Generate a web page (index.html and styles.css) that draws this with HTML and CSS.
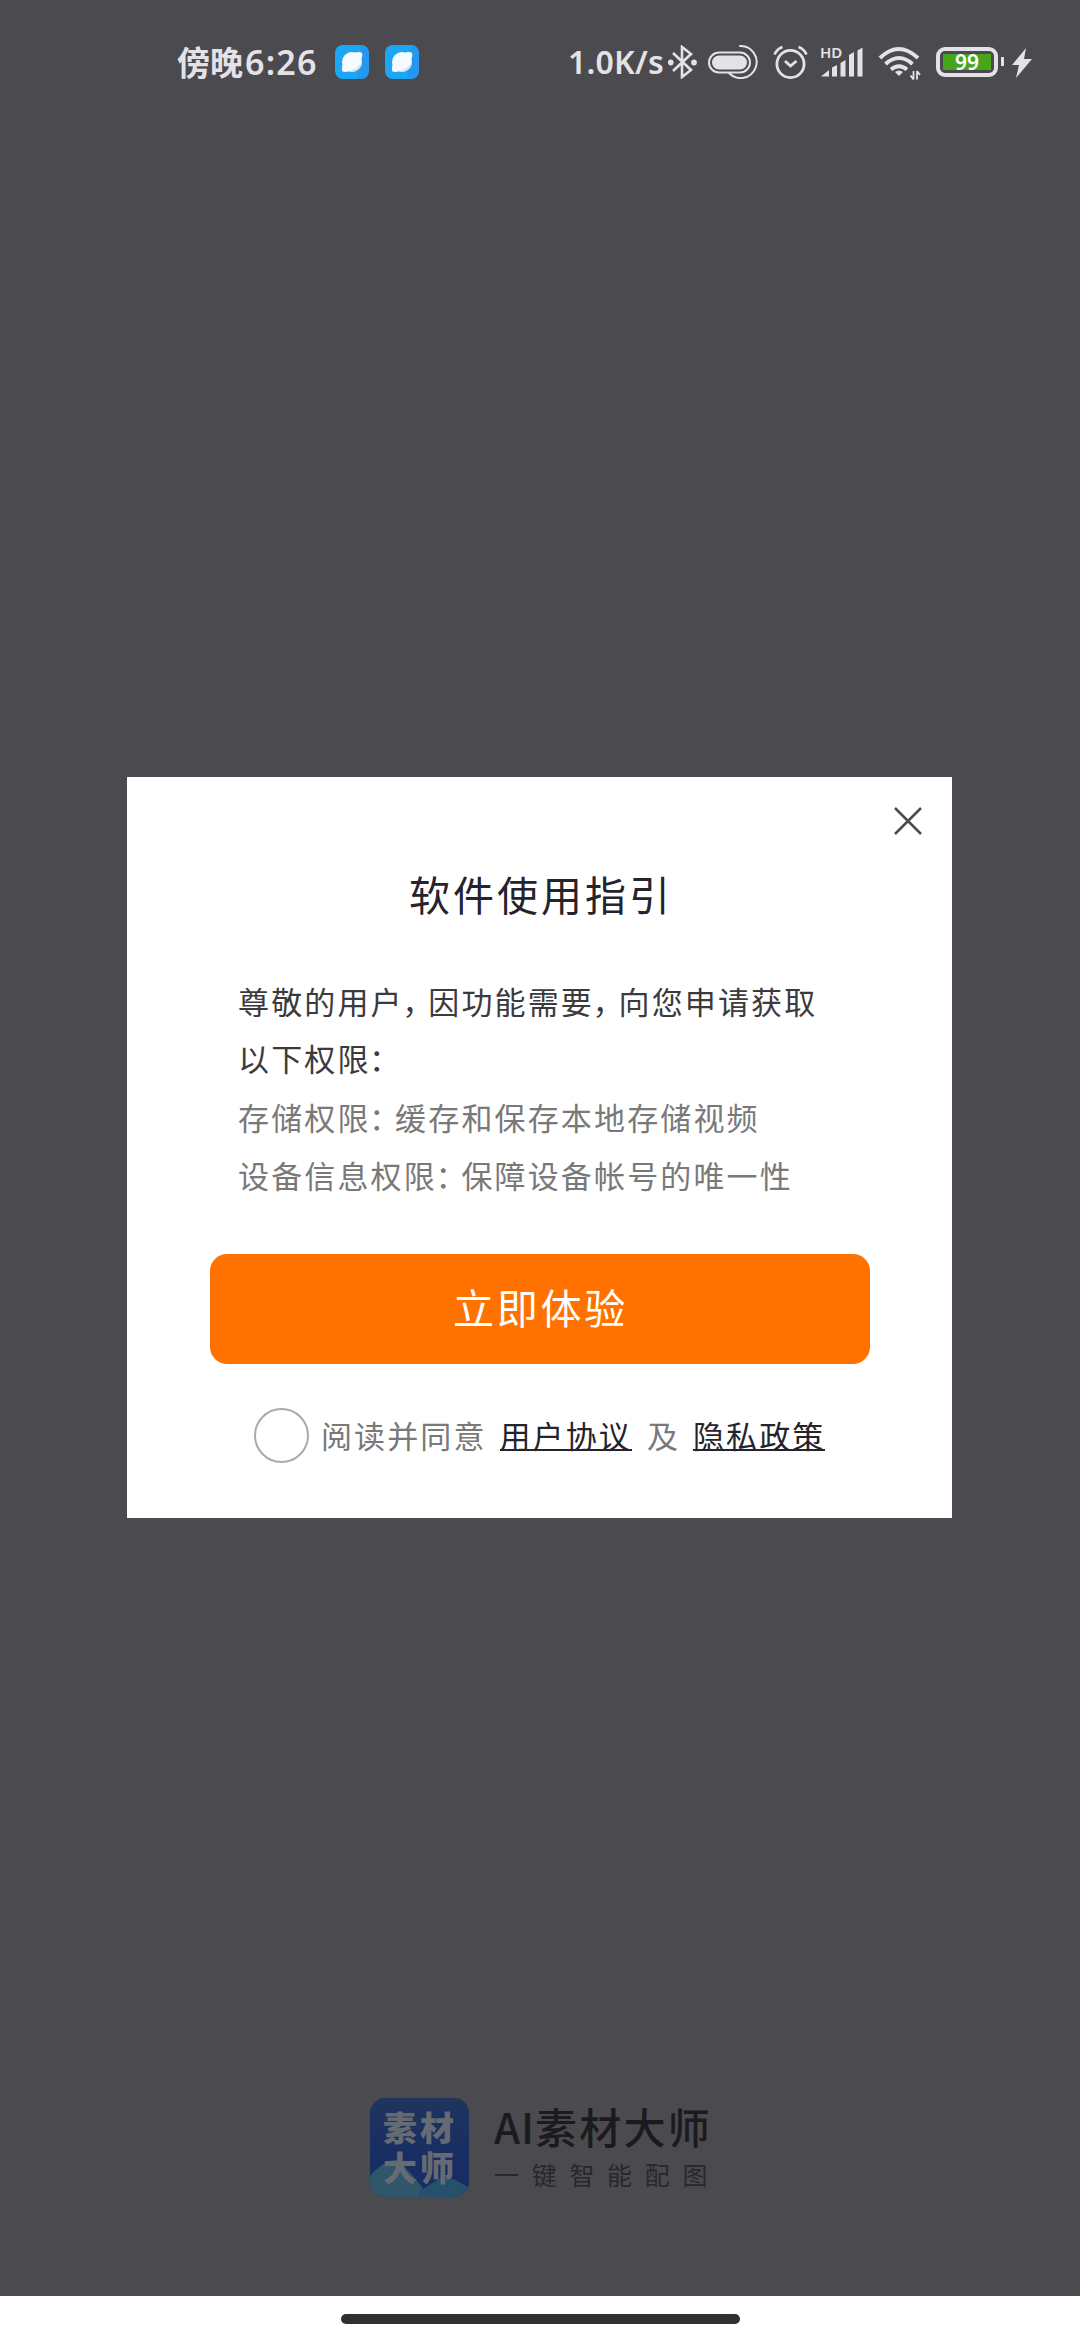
FILE: index.html
```html
<!DOCTYPE html>
<html lang="zh-CN">
<head>
<meta charset="utf-8">
<title>AI素材大师</title>
<link rel="stylesheet" href="styles.css">
</head>
<body>
<div class="screen">
  <header class="status">
    <span class="time">傍晚<span class="clock">6:26</span></span>
    <svg class="app" viewBox="0 0 34 34"><rect width="34" height="34" rx="8" fill="#1ba6f6"/><path d="M26 0a8 8 0 0 1 8 8v18a8 8 0 0 1-8 8h-4z" fill="#2b90ee" opacity=".6"/><circle cx="17" cy="17" r="10" fill="#f5fbff"/><path d="M19 8q6-2 8 0 1 2-1 7M8 19q-2 5-.5 7.500 3 1 7-.5" fill="#f5fbff"/><path d="M26.500 14c0 7-6 11-13 12 7 3 15-4 13-12z" fill="#cfe5f4"/></svg>
    <svg class="app second" viewBox="0 0 34 34"><rect width="34" height="34" rx="8" fill="#1ba6f6"/><path d="M26 0a8 8 0 0 1 8 8v18a8 8 0 0 1-8 8h-4z" fill="#2b90ee" opacity=".6"/><circle cx="17" cy="17" r="10" fill="#f5fbff"/><path d="M19 8q6-2 8 0 1 2-1 7M8 19q-2 5-.5 7.500 3 1 7-.5" fill="#f5fbff"/><path d="M26.500 14c0 7-6 11-13 12 7 3 15-4 13-12z" fill="#cfe5f4"/></svg>
    <span class="speed">1.0K/s</span>
    <svg class="bluetooth" viewBox="0 0 29 34" fill="none" stroke="#e4e2e6" stroke-width="2.600"><path d="M5 8l18 17-9 7V2l9 7L5 26"/><circle cx="2.700" cy="17.500" r="1.600" fill="#e4e2e6"/><circle cx="26" cy="17.500" r="1.600" fill="#e4e2e6"/></svg>
    <svg class="pill" viewBox="0 0 50 34" fill="none" stroke="#e4e2e6" stroke-width="2"><rect x="1" y="7.500" width="41" height="20" rx="10"/><rect x="5" y="11.500" width="33" height="12" rx="6" fill="#e4e2e6"/><path d="M32 1a16 16 0 1 1-11 27" stroke-linecap="round"/></svg>
    <svg class="alarm" viewBox="0 0 35 34" fill="none" stroke="#e4e2e6" stroke-width="2.800"><circle cx="17.500" cy="19" r="13.600"/><path d="M12 16l5.500 5 6-5M1.500 9.500Q4 4 9.500 2M25.500 2Q31 4 33.500 9.500"/></svg>
    <span class="signal">
      <svg viewBox="0 0 42 34" fill="#e4e2e6"><path d="M0 31.500l8-6.500v6.500zM11 22.500l5-2.500v11.500h-5zM19.500 18l5-3v16.500h-5zM28 10l5-3v24.500h-5zM36.500 5.500l5-3v29h-5z"/></svg>
      <span class="hd">HD</span>
    </span>
    <svg class="wifi" viewBox="0 0 42 35" fill="none" stroke="#e4e2e6" stroke-width="4"><path d="M2 13Q20.500-5 40 13M7.500 19Q21 7 34.500 19M13 24.500Q21 18 29 24.500"/><path d="M21 31l-4-4q4-3 8 0z" fill="#e4e2e6" stroke="none"/><path d="M35.500 26v8.500M35.500 34.500l-3-4M39 34.500V26M39 26l3 4" stroke-width="1.800"/></svg>
    <span class="battery"><span class="charge">99</span></span>
    <span class="nub"></span>
    <svg class="bolt" viewBox="0 0 20 30" fill="#e4e2e6"><path d="M14 0L0 17h7L4 30 20 11h-8z"/></svg>
  </header>

  <main class="dialog">
    <svg class="close" viewBox="0 0 28 28" fill="none" stroke="#4b4b4b" stroke-width="2.500"><path d="M1 1l26 26M27 1L1 27"/></svg>
    <h1 class="title">软件使用指引</h1>
    <div class="copy">
      <p>尊敬的用户<i>，</i>因功能需要<i>，</i>向您申请获取</p>
      <p>以下权限<i>：</i></p>
      <p class="muted">存储权限<i>：</i>缓存和保存本地存储视频</p>
      <p class="muted">设备信息权限<i>：</i>保障设备帐号的唯一性</p>
    </div>
    <button class="start">立即体验</button>
    <div class="consent">
      <span class="radio"></span>
      <span class="agree">阅读并同意</span>
      <a class="link">用户协议</a>
      <span class="and">及</span>
      <a class="link">隐私政策</a>
    </div>
  </main>

  <footer class="brand">
    <div class="logo">
      <svg class="hills" viewBox="0 0 99 99"><path d="M0 78Q14 62 26 62 38 70 54 92L59 99H0z" fill="#30566a"/><path d="M50 93L70 80Q78 76 99 90V99H48z" fill="#27506c"/></svg>
      <span>素材</span><span>大师</span>
    </div>
    <div class="names">
      <div class="name"><span class="ai">AI</span>素材大师</div>
      <div class="slogan">一键智能配图</div>
    </div>
  </footer>
  <nav class="gesture"><span class="bar"></span></nav>
</div>
</body>
</html>
```
FILE: styles.css
```css
* { box-sizing: border-box; }
body {
  margin: 0;
  font-family: "Noto Sans CJK SC", sans-serif;
}
.screen {
  width: 1080px;
  height: 2340px;
  display: flex;
  flex-direction: column;
  overflow: hidden;
  background: #4b4a4e;
}
.status {
  height: 124px;
  flex: none;
  display: flex;
  align-items: flex-start;
  padding: 45px 0 0 177px;
  color: #e4e2e6;
}
.status > * { flex: none; }
.time {
  width: 158px;
  margin-top: -1px;
  font-size: 33px;
  line-height: 34px;
  font-weight: 700;
  white-space: nowrap;
}
.clock {
  font-family: "Noto Sans", sans-serif;
  font-weight: 600;
  font-size: 34px;
  letter-spacing: 1.200px;
  margin-left: 2px;
}
.app { width: 34px; height: 34px; }
.second { margin-left: 16px; }
.speed {
  width: 99px;
  margin: -1px 0 0 149px;
  font: 600 32px/35px "Noto Sans", sans-serif;
  letter-spacing: .2px;
  white-space: nowrap;
}
.bluetooth { width: 29px; height: 34px; margin-left: 1px; }
.pill { width: 50px; height: 34px; margin-left: 11px; }
.alarm { width: 35px; height: 34px; margin-left: 15px; }
.signal { position: relative; width: 42px; height: 34px; margin-left: 13px; }
.signal svg { width: 42px; height: 34px; display: block; }
.hd {
  position: absolute;
  left: -1px;
  top: 0;
  font: 600 15px/14px "Noto Sans", sans-serif;
}
.wifi { width: 42px; height: 35px; margin-left: 15px; overflow: visible; }
.battery {
  width: 62px;
  height: 30px;
  margin: 2px 0 0 16px;
  padding: 3px;
  border: 4px solid #e4e2e6;
  border-radius: 9px;
}
.charge {
  display: block;
  height: 16px;
  background: #47a51c;
  color: #fff;
  text-align: center;
  font: 600 21px/17px "Noto Sans", sans-serif;
}
.nub { width: 3px; height: 9px; margin: 12px 0 0 3px; background: #e4e2e6; }
.bolt { width: 20px; height: 30px; margin: 3px 0 0 8px; }

.dialog {
  width: 825px;
  height: 741px;
  flex: none;
  margin: 653px 0 0 127px;
  background: #fff;
  display: flex;
  flex-direction: column;
  align-items: center;
}
.close {
  width: 28px;
  height: 28px;
  align-self: flex-end;
  margin: 30px 30px 0 0;
}
.title {
  margin: 28px 0 0 3px;
  font-size: 41px;
  line-height: 60px;
  font-weight: 400;
  letter-spacing: 3px;
  color: #25232b;
}
.copy {
  width: 603px;
  margin: 49px 0 0;
  font-size: 31px;
  line-height: 58.500px;
  letter-spacing: 2.150px;
  color: #3b3a3c;
  white-space: nowrap;
}
.copy p { margin: 0; }
.copy p:first-child { line-height: 57px; }
.copy i { font-style: normal; letter-spacing: -5px; margin-left: -1.500px; }
.copy .muted { color: #79797a; }
.start {
  width: 660px;
  height: 110px;
  margin-top: 49.500px;
  padding: 0 0 6px 2px;
  border: 0;
  border-radius: 17px;
  background: #ff7200;
  color: #fff;
  font: 400 41px/104px "Noto Sans CJK SC", sans-serif;
  letter-spacing: 2.700px;
}
.consent {
  align-self: stretch;
  display: flex;
  align-items: center;
  height: 56px;
  margin: 43px 0 0 127px;
  font-size: 31px;
  line-height: 56px;
  letter-spacing: 2.100px;
  color: #79797a;
}
.radio {
  width: 55px;
  height: 55px;
  border: 2.500px solid #aaa;
  border-radius: 50%;
}
.agree { margin-left: 12px; }
.link {
  height: 31px;
  line-height: 30px;
  margin-left: 13px;
  color: #25232b;
  border-bottom: 2px solid #25232b;
}
.and { margin-left: 15px; }

.brand {
  margin: 580px 0 0 370px;
  display: flex;
  flex: none;
  height: 99px;
}
.logo {
  position: relative;
  width: 99px;
  height: 99px;
  overflow: hidden;
  border-radius: 15px;
  padding: 9px 0 0 13px;
  background: linear-gradient(#1f355d, #182d63 60%);
  color: #666a72;
  font-size: 34px;
  line-height: 40px;
  font-weight: 900;
  letter-spacing: 3px;
  display: flex;
  flex-direction: column;
}
.logo span { position: relative; }
.hills { position: absolute; left: 0; top: 0; width: 99px; height: 99px; }
.names { margin-left: 25px; white-space: nowrap; }
.name {
  margin-top: -2px;
  font-size: 42px;
  line-height: 60px;
  font-weight: 500;
  letter-spacing: 2.200px;
  color: #1b1b1f;
}
.ai { letter-spacing: 1px; }
.slogan {
  margin-top: 1px;
  font-size: 25px;
  line-height: 34px;
  letter-spacing: 12.700px;
  color: #28282c;
}
.gesture {
  height: 44px;
  margin-top: auto;
  background: #fff;
  display: flex;
  justify-content: center;
  align-items: flex-start;
  padding-top: 18px;
}
.bar { width: 399px; height: 10px; border-radius: 5px; background: #303030; }
```
